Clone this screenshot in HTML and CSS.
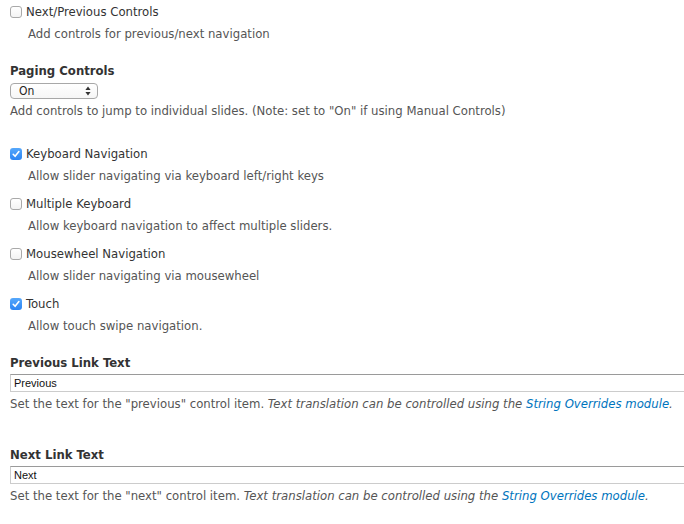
FILE: index.html
```html
<!DOCTYPE html>
<html lang="en">
<head>
<meta charset="utf-8">
<title>Slider settings</title>
<link rel="stylesheet" href="styles.css">
</head>
<body>
<form class="form">
  <div class="item item-first">
    <label class="option"><span class="cb"></span>Next/Previous Controls</label>
    <div class="desc desc-indent">Add controls for previous/next navigation</div>
  </div>

  <div class="item item-select">
    <label class="title">Paging Controls</label>
    <div class="select">
      <span class="select-value">On</span>
      <svg class="select-arrows" width="6" height="10" viewBox="0 0 6 10"><path d="M3 0.5 L5.6 4 L0.4 4 Z M3 9.5 L5.6 6 L0.4 6 Z" fill="#333"/></svg>
    </div>
    <div class="desc desc-gap">Add controls to jump to individual slides. (Note: set to "On" if using Manual Controls)</div>
  </div>

  <div class="item item-after-select">
    <label class="option"><span class="cb cb-on"><svg width="12" height="12" viewBox="0 0 12 12"><path d="M3.2 6.3 L5.1 8.3 L8.9 3.6" fill="none" stroke="#fff" stroke-width="1.6" stroke-linecap="round" stroke-linejoin="round"/></svg></span>Keyboard Navigation</label>
    <div class="desc desc-indent">Allow slider navigating via keyboard left/right keys</div>
  </div>

  <div class="item">
    <label class="option"><span class="cb"></span>Multiple Keyboard</label>
    <div class="desc desc-indent">Allow keyboard navigation to affect multiple sliders.</div>
  </div>

  <div class="item">
    <label class="option"><span class="cb"></span>Mousewheel Navigation</label>
    <div class="desc desc-indent">Allow slider navigating via mousewheel</div>
  </div>

  <div class="item">
    <label class="option"><span class="cb cb-on"><svg width="12" height="12" viewBox="0 0 12 12"><path d="M3.2 6.3 L5.1 8.3 L8.9 3.6" fill="none" stroke="#fff" stroke-width="1.6" stroke-linecap="round" stroke-linejoin="round"/></svg></span>Touch</label>
    <div class="desc desc-indent">Allow touch swipe navigation.</div>
  </div>

  <div class="item item-text item-text-first">
    <label class="title">Previous Link Text</label>
    <div class="text-input">Previous</div>
    <div class="desc desc-gap">Set the text for the "previous" control item. <em>Text translation can be controlled using the <a href="#">String Overrides module</a>.</em></div>
  </div>

  <div class="item item-text item-text-second">
    <label class="title">Next Link Text</label>
    <div class="text-input">Next</div>
    <div class="desc desc-gap">Set the text for the "next" control item. <em>Text translation can be controlled using the <a href="#">String Overrides module</a>.</em></div>
  </div>
</form>
</body>
</html>
```
FILE: styles.css
```css
html, body {
  margin: 0;
  padding: 0;
  background: #fff;
  overflow: hidden;
}
body {
  font-family: "DejaVu Sans Condensed", "DejaVu Sans", sans-serif;
  font-size: 13px;
  color: #333;
}
.form {
  padding: 3px 0 0 10px;
}
.item {
  display: flex;
  flex-direction: column;
  align-items: flex-start;
  margin-top: 10px;
}
.item-first { margin-top: 0; }
.item-select { margin-top: 19px; }
.item-after-select { margin-top: 25px; }
.item-text-first { margin-top: 19px; }
.item-text-second { margin-top: 33px; }

.option {
  display: flex;
  align-items: center;
  height: 18px;
  line-height: 18px;
  color: #333;
}
.cb {
  box-sizing: border-box;
  width: 12px;
  height: 12px;
  margin-right: 4px;
  border: 1px solid #a9a9a9;
  border-radius: 3px;
  background: linear-gradient(#fff, #f3f3f3);
  display: flex;
  align-items: center;
  justify-content: center;
}
.cb svg { display: block; }
.cb-on {
  border: none;
  background: linear-gradient(#56a8fb, #2b84f3);
}
.desc {
  line-height: 18px;
  color: #555;
}
.desc-indent {
  margin-top: 4px;
  margin-left: 18px;
}
.desc-gap { margin-top: 3px; }
.title {
  font-weight: bold;
  line-height: 18px;
  height: 18px;
  color: #333;
}
.select {
  box-sizing: border-box;
  margin-top: 3px;
  width: 88px;
  height: 16px;
  border: 1px solid #a8a8a8;
  border-radius: 4px;
  background: linear-gradient(#fff, #f6f6f6);
  display: flex;
  align-items: center;
  justify-content: space-between;
  padding: 0 6px 0 8px;
  font-size: 12px;
  color: #222;
}
.select-value { line-height: 14px; }
.select-arrows { display: block; }
.text-input {
  box-sizing: border-box;
  margin-top: 2px;
  width: 700px;
  height: 18px;
  border: 1px solid #cccccc;
  border-top-color: #9a9a9a;
  padding: 0 3px;
  font-family: "Liberation Sans", Arial, sans-serif;
  font-size: 11px;
  line-height: 16px;
  color: #111;
}
.desc em { font-style: italic; }
.desc a {
  color: #0074bd;
  text-decoration: none;
}
```
